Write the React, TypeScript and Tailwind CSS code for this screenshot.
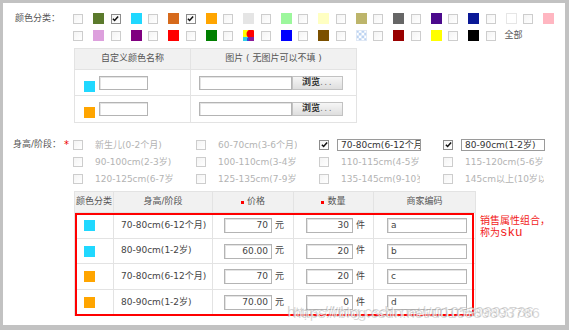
type Sw = { c: string; on?: boolean }

const row1: Sw[] = [
  { c: 'bg-[#5b7a2c]' },
  { c: 'bg-[#20d8ff]', on: true },
  { c: 'bg-[#d66a1c]' },
  { c: 'bg-[#ffa500]', on: true },
  { c: 'bg-[#e5e5e5]' },
  { c: 'bg-[#9cf79c]' },
  { c: 'bg-[#ffffc2]' },
  { c: 'bg-[#bdb56b]' },
  { c: 'bg-[#666666]' },
  { c: 'bg-[#4b0a8c]' },
  { c: 'bg-[#0a1896]' },
  { c: 'bg-white border border-[#e6e6e6]' },
  { c: 'bg-[#ffb6c1]' },
]

const row2: Sw[] = [
  { c: 'bg-[#dda0dd]' },
  { c: 'bg-[#800080]' },
  { c: 'bg-[#ff0000]' },
  { c: 'bg-[#007f00]' },
  { c: 'multi' },
  { c: 'bg-[#0000ff]' },
  { c: 'bg-[#7b5000]' },
  { c: 'checker' },
  { c: 'bg-[#990000]' },
  { c: 'bg-[#ffff00]' },
  { c: 'bg-black' },
]

const sizes = [
  [
    { t: '新生儿(0-2个月)' },
    { t: '60-70cm(3-6个月)' },
    { t: '70-80cm(6-12个月)', on: true },
    { t: '80-90cm(1-2岁)', on: true },
  ],
  [{ t: '90-100cm(2-3岁)' }, { t: '100-110cm(3-4岁)' }, { t: '110-115cm(4-5岁)' }, { t: '115-120cm(5-6岁)' }],
  [{ t: '120-125cm(6-7岁)' }, { t: '125-135cm(7-9岁)' }, { t: '135-145cm(9-10岁)' }, { t: '145cm以上(10岁以上)' }],
]

const skus = [
  { c: 'bg-[#20d8ff]', s: '70-80cm(6-12个月)', p: '70', q: '30', code: 'a', h: 'h-[26px]' },
  { c: 'bg-[#20d8ff]', s: '80-90cm(1-2岁)', p: '60.00', q: '20', code: 'b', h: 'h-[25px]' },
  { c: 'bg-[#ffa500]', s: '70-80cm(6-12个月)', p: '70', q: '20', code: 'c', h: 'h-[26px]' },
  { c: 'bg-[#ffa500]', s: '80-90cm(1-2岁)', p: '70.00', q: '0', code: 'd', h: 'h-[26px]' },
]

function Check({ on = false }: { on?: boolean }) {
  return (
    <span
      className={`flex h-[10px] w-[10px] shrink-0 items-center justify-center border bg-gradient-to-br from-[#f4f4f4] to-white ${
        on ? 'border-[#8c8c8c]' : 'border-[#cdcdcd]'
      }`}
    >
      {on && (
        <svg viewBox="0 0 8 8" className="h-[7px] w-[7px]">
          <path d="M1 4.2 L3 6.3 L7 1.6" fill="none" stroke="#111" strokeWidth="1.7" />
        </svg>
      )}
    </span>
  )
}

function Swatch({ c }: { c: string }) {
  if (c === 'multi')
    return (
      <svg viewBox="0 0 11 11" className="h-[11px] w-[11px] shrink-0">
        <rect width="11" height="11" fill="#ff0" />
        <circle cx="8" cy="4" r="4.5" fill="#f00" />
        <rect x="0" y="7" width="5" height="4" fill="#2cd0e8" />
        <rect x="5" y="7" width="6" height="4" fill="#8a1a9a" />
        <rect x="4" y="8" width="2" height="3" fill="#3344dd" />
      </svg>
    )
  if (c === 'checker')
    return (
      <svg viewBox="0 0 12 12" className="h-[11px] w-[11px] shrink-0">
        <rect width="12" height="12" fill="#fff" />
        {[0, 3, 6, 9].map((y) =>
          [0, 3, 6, 9].map((x) =>
            (x + y) % 6 === 0 ? <rect key={`${x}-${y}`} x={x} y={y} width="3" height="3" fill="#bcd3f2" /> : null,
          ),
        )}
        <rect x="0.5" y="0.5" width="11" height="11" fill="none" stroke="#dfe8f5" />
      </svg>
    )
  return <span className={`block h-[11px] w-[11px] shrink-0 ${c}`} />
}

function Box({ w, h = 'h-[14px]', value = '', right = false }: { w: string; h?: string; value?: string; right?: boolean }) {
  return (
    <span
      className={`block shrink-0 overflow-hidden whitespace-nowrap border border-[#b4b4b4] bg-white px-[3px] leading-[12px] text-[#444] shadow-[inset_1px_1px_0_#e4e4e4] ${w} ${h} ${
        right ? 'text-right' : ''
      }`}
    >
      {value}
    </span>
  )
}

function Browse() {
  return (
    <span className="flex h-[14px] w-[51px] shrink-0 items-center justify-center border border-[#c2c2c2] bg-gradient-to-b from-[#f6f6f6] to-[#dedede] text-[#333]">
      <span className="font-bold">浏览</span>
      <span className="tracking-[1.5px] text-[#777]">...</span>
    </span>
  )
}

function Dot() {
  return <span className="inline-block h-[3px] w-[3px] bg-[#f00]" />
}

export default function App() {
  return (
    <div className="flex h-[330px] w-[569px] bg-[#c2c2c2] pb-[5px] pl-[3px] pr-[4px] pt-[3px] font-['DejaVu_Sans','Noto_Sans_CJK_SC',sans-serif] text-[9px] text-[#444]">
      <div className="relative flex-1 overflow-hidden bg-white">
        {/* 颜色分类 */}
        <div className="flex pt-[7px]">
          <div className="w-[70px] shrink-0 pl-[12px] leading-[17px] text-[#555]">颜色分类：</div>
          <div>
            <div className="grid h-[17px] grid-cols-[repeat(13,37.5px)] items-center">
              {row1.map((s, i) => (
                <div key={i} className="flex items-center gap-[10px]">
                  <Check on={s.on} />
                  <Swatch c={s.c} />
                </div>
              ))}
            </div>
            <div className="grid h-[17px] grid-cols-[repeat(13,37.5px)] items-center">
              {row2.map((s, i) => (
                <div key={i} className="flex items-center gap-[10px]">
                  <Check on={s.on} />
                  <Swatch c={s.c} />
                </div>
              ))}
              <div className="flex items-center gap-[9px]">
                <Check />
                <span className="text-[#555]">全部</span>
              </div>
            </div>
          </div>
        </div>

        {/* 自定义颜色 */}
        <div className="ml-[71px] mt-[4px] w-[283px] border border-[#e3e3e3]">
          <div className="flex h-[21px] border-b border-[#e3e3e3] bg-[#f1f1f1] text-[#555]">
            <div className="flex w-[116px] items-center justify-center border-r border-[#e3e3e3]">自定义颜色名称</div>
            <div className="flex flex-1 items-center justify-center">图片 ( 无图片可以不填 )</div>
          </div>
          {['bg-[#20d8ff]', 'bg-[#ffa500]'].map((c, i) => (
            <div key={c} className={`flex h-[26px] ${i === 0 ? 'border-b border-[#e3e3e3]' : ''}`}>
              <div className="flex w-[116px] items-center gap-[4px] border-r border-[#e3e3e3] pl-[9px]">
                <span className={`mt-[7px] block h-[11px] w-[11px] ${c}`} />
                <Box w="w-[49px]" />
              </div>
              <div className="flex flex-1 items-center pl-[8px]">
                <Box w="w-[93px]" />
                <Browse />
              </div>
            </div>
          ))}
        </div>

        {/* 身高/阶段 */}
        <div className="mt-[13px] flex">
          <div className="flex h-[17px] w-[70px] shrink-0 items-center pl-[10px] text-[#555]">
            <span>身高/阶段：</span>
            <span className="ml-[3px] text-[10px] text-[#e00]">*</span>
          </div>
          <div>
            {sizes.map((row, r) => (
              <div key={r} className="grid h-[17px] grid-cols-[123px_123px_124px_123px] items-center">
                {row.map((o) => (
                  <div key={o.t} className="flex items-center gap-[8px]">
                    <Check on={o.on} />
                    <span
                      className={`block h-[12px] w-[84px] overflow-hidden whitespace-nowrap border px-[3px] leading-[10px] ${
                        o.on ? 'border-[#9a9a9a] text-[#333]' : 'border-transparent text-[#b3b3b3]'
                      }`}
                    >
                      {o.t}
                    </span>
                  </div>
                ))}
              </div>
            ))}
          </div>
        </div>

        {/* SKU 表格 */}
        <div className="mt-[4px] flex">
          <div className="ml-[71px] border-l border-t border-[#e3e3e3]">
            <div className="grid h-[21px] grid-cols-[39px_99px_81px_80px_102px] bg-[#f1f1f1] text-[#555]">
              <div className="flex items-center justify-center border-b border-r border-[#e3e3e3]">颜色分类</div>
              <div className="flex items-center justify-center border-b border-r border-[#e3e3e3]">身高/阶段</div>
              <div className="flex items-center justify-center gap-[3px] border-b border-r border-[#e3e3e3]">
                <Dot />
                价格
              </div>
              <div className="flex items-center justify-center gap-[3px] border-b border-r border-[#e3e3e3]">
                <Dot />
                数量
              </div>
              <div className="flex items-center justify-center border-b border-r border-[#e3e3e3]">商家编码</div>
            </div>
            <div className="relative">
              {skus.map((s) => (
                <div key={s.code} className={`grid grid-cols-[39px_99px_81px_80px_102px] ${s.h}`}>
                  <div className="flex items-center border-b border-r border-[#e3e3e3] pl-[9px]">
                    <span className={`block h-[11px] w-[11px] ${s.c}`} />
                  </div>
                  <div className="flex items-center border-b border-r border-[#e3e3e3] pl-[7px] text-[#444]">{s.s}</div>
                  <div className="flex items-center gap-[3px] border-b border-r border-[#e3e3e3] pl-[11px]">
                    <Box w="w-[48px]" h="h-[15px]" value={s.p} right />
                    <span>元</span>
                  </div>
                  <div className="flex items-center gap-[3px] border-b border-r border-[#e3e3e3] pl-[12px]">
                    <Box w="w-[47px]" h="h-[15px]" value={s.q} right />
                    <span>件</span>
                  </div>
                  <div className="flex items-center border-b border-r border-[#e3e3e3] pl-[13px]">
                    <Box w="w-[80px]" h="h-[15px]" value={s.code} />
                  </div>
                </div>
              ))}
              <div className="pointer-events-none absolute bottom-0 left-0 right-[2px] top-0 border-2 border-[#ff0000]" />
            </div>
          </div>
          <div className="ml-[4px] mt-[24px] flex flex-col text-[10px] leading-[12px] text-[#f21b1b]">
            <span>销售属性组合，</span>
            <span>
              称为<span className="font-['Liberation_Mono',monospace] text-[12.5px]">sku</span>
            </span>
          </div>
        </div>

        {/* 水印 */}
        <div className="pointer-events-none absolute left-[284px] top-[298px] whitespace-nowrap font-['Liberation_Sans',sans-serif] text-[15px] text-[rgba(160,160,160,0.45)] [text-shadow:1px_1px_0_rgba(255,255,255,0.8)]">
          https://blog.csdn.net/u010589893786
        </div>
        <div className="pointer-events-none absolute left-[290px] top-[299px] whitespace-nowrap font-['Liberation_Sans',sans-serif] text-[15px] text-[rgba(160,160,160,0.4)] [text-shadow:1px_1px_0_rgba(255,255,255,0.8)]">
          https://blog.csdn.net/u010589893786
        </div>
      </div>
    </div>
  )
}
